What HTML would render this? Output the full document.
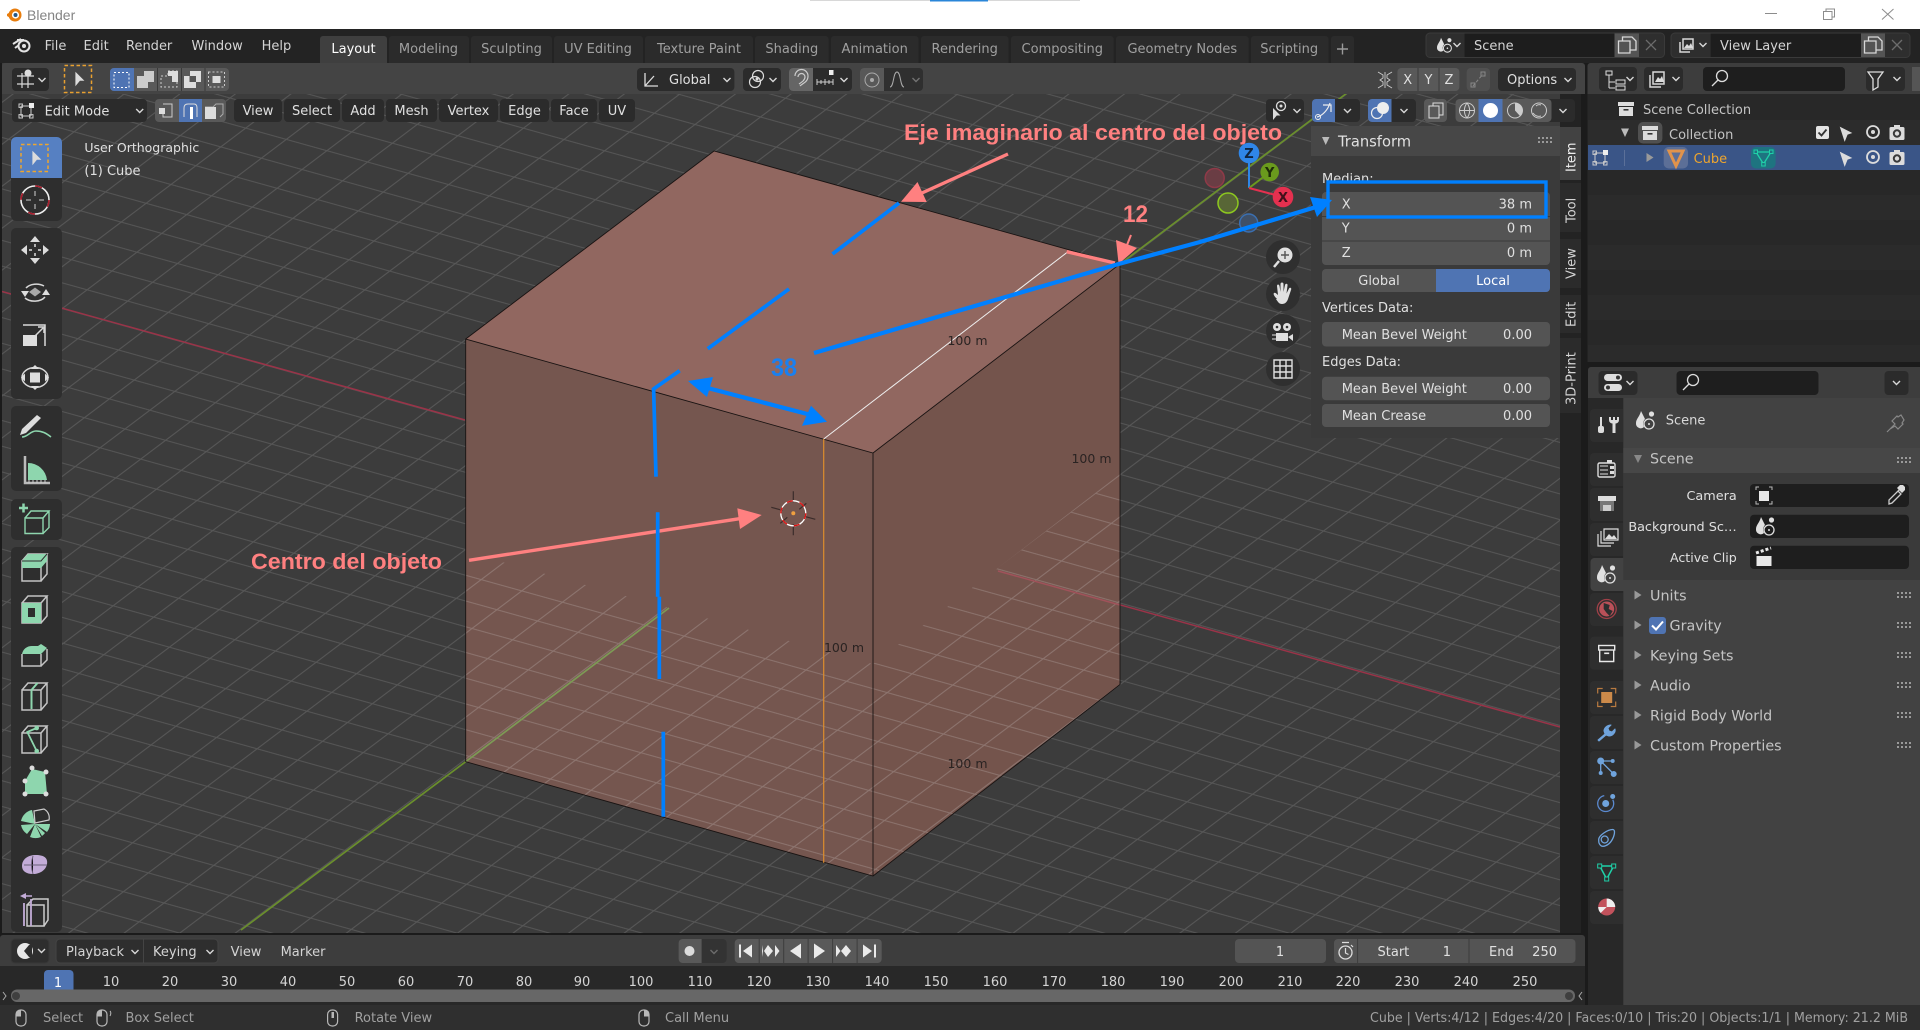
<!DOCTYPE html>
<html><head><meta charset="utf-8"><title>Blender</title>
<style>
html,body{margin:0;padding:0;background:#1c1c1c;width:1920px;height:1030px;overflow:hidden}
svg{display:block}
text{font-family:"DejaVu Sans","Liberation Sans",sans-serif;font-size:13px;fill:#d4d4d4;white-space:pre}
.m{fill:#e0e0e0}.d{fill:#a0a0a0}.e{text-anchor:end}.c{text-anchor:middle}
.p{font-family:"Liberation Sans",Arial,sans-serif;font-weight:bold;fill:#ff8080;font-size:22px}
.h{font-size:14.3px;fill:#c4c4c4}
.dim{fill:#2a2322;font-size:12.5px}
.r{fill:#545454}.b{fill:#2b2b2b}.k{fill:#1e1e1e}.bl{fill:#4f74b3}
.w{fill:none;stroke:#d8d8d8;stroke-width:1.5}
.tg{fill:none;stroke:#c4c4c4;stroke-width:1.5}
.gf{fill:#8ed6ae}
</style></head>
<body>
<svg width="1920" height="1030" viewBox="0 0 1920 1030" xmlns="http://www.w3.org/2000/svg">
<defs>
<pattern id="g" x="-5" y="-5" width="10" height="10" patternUnits="userSpaceOnUse" patternTransform="matrix(4.06 1.13 2.49 -1.88 793 512)">
<path d="M0 5H10" stroke="#575757" stroke-width=".38" fill="none"/><path d="M5 0V10" stroke="#575757" stroke-width=".32" fill="none"/>
</pattern>
<pattern id="g2" x="-5" y="-5" width="10" height="10" patternUnits="userSpaceOnUse" patternTransform="matrix(4.06 1.13 2.49 -1.88 793 512)">
<path d="M0 5H10" stroke="#a59490" stroke-width=".38" fill="none"/><path d="M5 0V10" stroke="#a59490" stroke-width=".32" fill="none"/>
</pattern>
<path id="ch" d="M-3.500-2L0 1.500L3.500-2" fill="none" stroke="#d8d8d8" stroke-width="1.400"/>
<path id="gr" d="M0 1h14M0 5h14" stroke="#9a9a9a" stroke-width="2" stroke-dasharray="2 2" fill="none"/>
<path id="tr" d="M-3.500-4.500L3.500 0L-3.500 4.500Z" fill="#999"/>
<g id="sc"><path d="M-5-9C-6-4-10-1-10 3A4.800 4.800 0 0 0-2 7A6.500 6.500 0 0 1-1-1Z" fill="#e0e0e0"/><circle cx="3" cy="4" r="5" fill="none" stroke="#e0e0e0" stroke-width="1.300"/><circle cx="3" cy="4" r="1" fill="#e0e0e0"/><circle cx="5.500" cy="-6" r="2.600" fill="#e0e0e0"/></g>
<g id="ar"><path d="M-8-6h16v4h-16zM-7-1h14v9h-14z" fill="#dcdcdc"/><rect x="-2.500" y="1" width="5" height="1.600" fill="#333"/></g>
<g id="ey"><circle r="6" fill="none" stroke="#dcdcdc" stroke-width="1.800"/><circle r="2" fill="#dcdcdc"/></g>
<g id="cm"><rect x="-7.500" y="-6" width="15" height="13" rx="1.500" fill="#dcdcdc"/><rect x="-3" y="-8" width="6" height="3" fill="#dcdcdc"/><circle cy="0.500" r="4.200" fill="#3a3a3a"/><circle cy="0.500" r="2.200" fill="#dcdcdc"/></g>
<path id="pt" d="M-4-8L6 2H1L-4 8Z" fill="#dcdcdc"/>
<path id="bx" class="tg" d="M-13-6h19v20h-19zM-13-6l6-7h19l-6 7M6 14l6-7V-13"/>
<g id="mo"><rect x="-5" y="-8" width="10" height="16" rx="4.500" fill="none" stroke="#b8b8b8" stroke-width="1.200"/></g>
<g id="vt"><path d="M-5-5H5M-5 5H5M-5-5V5M5-5V5" stroke="#ccc" stroke-width="1" fill="none"/><rect x="-7" y="-7" width="3.400" height="3.400" fill="none" stroke="#ccc"/><rect x="3" y="-8" width="5" height="5" fill="#eee"/><rect x="-7" y="3.600" width="3.400" height="3.400" fill="none" stroke="#ccc"/><rect x="3.600" y="3.600" width="3.400" height="3.400" fill="none" stroke="#ccc"/></g>
<clipPath id="vp"><rect x="2" y="63" width="1558" height="870"/></clipPath>
</defs>

<!-- base -->
<rect width="1920" height="1030" fill="#1b1b1b"/>
<rect width="1920" height="29" fill="#fff"/>
<rect x="810" y="0" width="270" height="1" fill="#d8d8d8"/><rect x="930" y="0" width="58" height="1.500" fill="#2a86d8"/>
<rect y="29" width="1920" height="34" fill="#232323"/>

<!-- titlebar -->
<g transform="translate(14,15)"><circle cx="1" cy="0" r="6.500" fill="#e87d0d"/><path d="M-7-1L0-5V5L-7 1Z" fill="#e87d0d"/><circle cx="1.500" cy="0" r="3.600" fill="#fff"/><circle cx="1.500" cy="0" r="2" fill="#265787"/></g>
<text x="27" y="20" style="font-family:'Liberation Sans',sans-serif;font-size:14px;fill:#848484">Blender</text>
<path d="M1765 13.500h12" stroke="#8c8c8c" fill="none"/>
<path d="M1823.500 11.500h8.500v8h-8.500zM1826 11.500v-2.500h8.500v8h-2.500" stroke="#8c8c8c" fill="none"/>
<path d="M1882 9l11.500 10.500M1893.500 9L1882 19.500" stroke="#8c8c8c" fill="none"/>

<!-- top menu -->
<g transform="translate(22,45)"><circle cx="2" cy="1" r="5.500" fill="none" stroke="#e4e4e4" stroke-width="2"/><circle cx="2" cy="1" r="2" fill="#e4e4e4"/><path d="M-9-1L-1-6M-7 3L-3 0M-5-5H2" stroke="#e4e4e4" stroke-width="2" fill="none"/></g>
<text x="44.600" y="50">File</text><text x="83.500" y="50">Edit</text><text x="126" y="50">Render</text><text x="191.500" y="50">Window</text><text x="261.600" y="50">Help</text>

<!-- workspace tabs -->
<path d="M320 63V39a3 3 0 0 1 3-3h61a3 3 0 0 1 3 3v24z" fill="#3f3f3f"/>
<g fill="#2b2b2b">
<path d="M389 63V39a3 3 0 0 1 3-3h74a3 3 0 0 1 3 3v24z"/>
<path d="M471 63V39a3 3 0 0 1 3-3h75a3 3 0 0 1 3 3v24z"/>
<path d="M554 63V39a3 3 0 0 1 3-3h83a3 3 0 0 1 3 3v24z"/>
<path d="M645 63V39a3 3 0 0 1 3-3h102a3 3 0 0 1 3 3v24z"/>
<path d="M755 63V39a3 3 0 0 1 3-3h67.600a3 3 0 0 1 3 3v24z"/>
<path d="M831 63V39a3 3 0 0 1 3-3h81.500a3 3 0 0 1 3 3v24z"/>
<path d="M921 63V39a3 3 0 0 1 3-3h81.500a3 3 0 0 1 3 3v24z"/>
<path d="M1011 63V39a3 3 0 0 1 3-3h96.700a3 3 0 0 1 3 3v24z"/>
<path d="M1116 63V39a3 3 0 0 1 3-3h126.700a3 3 0 0 1 3 3v24z"/>
<path d="M1251 63V39a3 3 0 0 1 3-3h71.500a3 3 0 0 1 3 3v24z"/>
<path d="M1331 63V39a3 3 0 0 1 3-3h17a3 3 0 0 1 3 3v24z"/>
</g>
<text class="c" x="353.500" y="53" style="fill:#fff">Layout</text>
<g class="d" text-anchor="middle"><text class="d c" x="428.500" y="53">Modeling</text><text class="d c" x="511.500" y="53">Sculpting</text><text class="d c" x="598" y="53">UV Editing</text><text class="d c" x="699" y="53">Texture Paint</text><text class="d c" x="791.800" y="53">Shading</text><text class="d c" x="874.700" y="53">Animation</text><text class="d c" x="964.700" y="53">Rendering</text><text class="d c" x="1062.300" y="53">Compositing</text><text class="d c" x="1182.300" y="53">Geometry Nodes</text><text class="d c" x="1289.200" y="53">Scripting</text></g>
<path d="M1337 49h11M1342.500 43.500v11" stroke="#9a9a9a" stroke-width="1.400"/>

<!-- scene selector -->
<rect x="1426" y="33" width="238.500" height="24.500" rx="4" fill="#2e2e2e" stroke="#3a3a3a"/>
<rect x="1464.500" y="33.500" width="150" height="23.500" fill="#1d1d1d"/>
<rect x="1614.500" y="33.500" width="24.500" height="23.500" fill="#545454"/>
<use href="#sc" transform="translate(1445,45) scale(.8)"/><use href="#ch" x="1457" y="45"/>
<text x="1474" y="50">Scene</text>
<path d="M1618.500 41h11.500v12h-11.500zM1622.500 41v-4h9.500l4 4v9h-6" fill="none" stroke="#d8d8d8" stroke-width="1.300"/>
<path d="M1646 40l10 10M1656 40l-10 10" stroke="#6c6c6c" stroke-width="1.300"/>
<rect x="1671" y="33" width="239" height="24.500" rx="4" fill="#2e2e2e" stroke="#3a3a3a"/>
<rect x="1710.700" y="33.500" width="150.300" height="23.500" fill="#1d1d1d"/>
<rect x="1861" y="33.500" width="24" height="23.500" fill="#545454"/>
<g class="w"><path d="M1680 42v10h10M1683 39v10h10V39z"/></g><path d="M1684 48l3-4 2 2 2-3 2 5z" fill="#dcdcdc"/><use href="#ch" x="1703" y="45"/>
<text x="1720" y="50">View Layer</text>
<path d="M1864.500 41h11.500v12h-11.500zM1868.500 41v-4h9.500l4 4v9h-6" fill="none" stroke="#d8d8d8" stroke-width="1.300"/>
<path d="M1892 40l10 10M1902 40l-10 10" stroke="#6c6c6c" stroke-width="1.300"/>

<!-- 3D viewport -->
<g clip-path="url(#vp)">
<rect x="2" y="63" width="1558" height="870" fill="#3c3c3c"/>
<rect x="2" y="63" width="1558" height="870" fill="url(#g)"/>
<!-- axes -->
<path d="M2 291.500L465 420M998 571L1560 727" stroke="#9a3348" stroke-width="1.500" fill="none"/>
<path d="M241 930L465.700 761.700M1120 264L1347 93" stroke="#6a8f2c" stroke-width="1.700" fill="none"/>
<!-- cube sides -->
<path d="M465.700 339L873 453V876L465.700 761.700Z" fill="#75564f"/>
<path d="M873 453L1120 264V684.500L873 876Z" fill="#74544c"/>
<path d="M465.700 552L873 664V876L465.700 761.700Z" fill="url(#g2)" opacity=".5"/>
<path d="M873 664L1120 474V684.500L873 876Z" fill="url(#g2)" opacity=".5"/>
<path d="M465.700 761.700L669 608" stroke="#7d9a55" stroke-width="1.700" fill="none"/>
<path d="M998 571L1120 605" stroke="#a0525a" stroke-width="1.500" fill="none"/>
<!-- top face -->
<path d="M465.700 339L714 151L1120 264L873 453Z" fill="#916760"/>
<path d="M465.700 339L714 151L1120 264L873 453ZM465.700 339V761.700L873 876L1120 684.500V264M873 453V876" fill="none" stroke="#191312" stroke-width=".9"/>
<path d="M823.700 439L1068 251.700" stroke="#eee" stroke-width="1"/>
<path d="M823.700 439V862.700" stroke="#dc8d2c" stroke-width="1.200"/>
<text class="dim c" x="967.500" y="345">100 m</text><text class="dim c" x="1091.500" y="463">100 m</text><text class="dim c" x="844" y="652">100 m</text><text class="dim c" x="967.500" y="768">100 m</text>

<!-- 3D cursor -->
<g transform="translate(793.300,513.300)">
<path d="M0-22V-11M0 11V22M-22-6L-11-3M11 3L22 6M-13 10L-6 4M6-4L13-10" stroke="#3b2c2a" stroke-width="1.200" fill="none"/>
<circle r="12.500" fill="none" stroke="#fff" stroke-width="1.300"/><circle r="12.500" fill="none" stroke="#d11" stroke-width="1.300" stroke-dasharray="6 7"/>
<circle r="2" fill="#f0a040"/>
</g>

<!-- gizmo -->
<g>
<circle cx="1214.700" cy="178" r="9.500" fill="#6a3d44" stroke="#8f3a48" stroke-width="1.500"/>
<circle cx="1228" cy="203" r="10" fill="#586636" stroke="#8dc81f" stroke-width="1.500"/>
<circle cx="1248.700" cy="223" r="9" fill="#3f5068" stroke="#3b6fb0" stroke-width="1.500"/>
<path d="M1249 188V160" stroke="#2f86e8" stroke-width="2"/><path d="M1249 188L1270 172" stroke="#6a9a1d" stroke-width="2"/><path d="M1249 188L1283 197" stroke="#e5304f" stroke-width="2"/>
<circle cx="1249" cy="153" r="10.300" fill="#2f86e8"/><circle cx="1269.700" cy="172" r="9.300" fill="#6a9a1d"/><circle cx="1283" cy="197" r="10.300" fill="#e5304f"/>
<text class="c" x="1249" y="158" style="font-weight:bold;fill:#10253f;font-size:13px">Z</text><text class="c" x="1269.700" y="177" style="font-weight:bold;fill:#1f2d08;font-size:13px">Y</text><text class="c" x="1283" y="202" style="font-weight:bold;fill:#40101a;font-size:13px">X</text>
</g>
<!-- nav gizmos -->
<circle cx="1283" cy="257" r="17" fill="#2f2f2f"/><circle cx="1283" cy="294" r="17" fill="#2f2f2f"/><circle cx="1283" cy="331" r="17" fill="#2f2f2f"/><circle cx="1283" cy="369" r="17" fill="#2f2f2f"/>
<circle cx="1285" cy="255" r="7.500" fill="#e0e0e0"/><path d="M1279 261L1274 267" stroke="#e0e0e0" stroke-width="2.500"/><path d="M1281 255h8M1285 251v8" stroke="#555" stroke-width="1.400"/>
<path transform="translate(0,3)" d="M1277 296c-3-3-4-5-3-6s3 1 4 2l-1-9c0-2 2-2 2.500 0l1 6 0-8c0-2 3-2 3 0v8l1.500-7c.5-2 3-1.500 2.500.5l-1 8 2.500-5c1-1.500 3-.5 2 1.500l-3 9c-1 3-3 5-6 5s-4-2-6-5z" fill="#e0e0e0"/>
<g transform="translate(0,2)"><circle cx="1277" cy="325" r="4" fill="#e0e0e0"/><circle cx="1287" cy="325" r="4" fill="#e0e0e0"/><rect x="1276" y="331" width="12" height="8" fill="#e0e0e0"/><path d="M1288 335l5-3v7z" fill="#e0e0e0"/><path d="M1272 333h4M1272 337h4" stroke="#e0e0e0"/><circle cx="1277" cy="325" r="1.300" fill="#333"/><circle cx="1287" cy="325" r="1.300" fill="#333"/></g>
<path d="M1274 360h18v18h-18zM1280 360v18M1286 360v18M1274 366h18M1274 372h18" fill="none" stroke="#e0e0e0" stroke-width="1.400"/>

<!-- annotations pink -->
<g fill="#ff8080" stroke="none">
<path d="M1008 154L917.500 195" stroke="#ff8080" stroke-width="3.400"/>
<path d="M901 201.700L917.500 182L926.700 202Z"/>
<path d="M469 560.300L742 518.300" stroke="#ff8080" stroke-width="3.400"/>
<path d="M761.700 515L737.300 508.300L740 529Z"/>
<path d="M1066.700 251.700L1115 263" stroke="#ff8080" stroke-width="3.400"/>
<path d="M1118.600 264L1116 240L1137 248Z"/><path d="M1127 245L1131 235" stroke="#ff8080" stroke-width="2"/>
</g>
<!-- annotations blue -->
<g stroke="#0080ff" fill="none" stroke-width="3.700">
<path d="M899 203L832.500 254M789 289L707.700 348.700M679.700 370.700L653.500 389L653.700 391.700L656 476.700"/>
<path d="M657.700 512.300V596.700M659.300 596.700V679M663.300 731.700V816.700"/>
<path d="M700 386L815 416" stroke-width="4.200"/>
</g>
<g fill="#0080ff">
<path d="M688 381L713 377L707 397Z"/>
<path d="M827 421.700L811 405.700L802 425.700Z"/>
</g>
<text x="771" y="376" style="font-family:'Liberation Sans',sans-serif;font-weight:bold;font-size:25px;fill:#1a80f0" textLength="26" lengthAdjust="spacingAndGlyphs">38</text>
<text class="p" x="904" y="140" textLength="378" lengthAdjust="spacingAndGlyphs">Eje imaginario al centro del objeto</text>
<text class="p" x="1123" y="222" textLength="25" lengthAdjust="spacingAndGlyphs" style="font-size:24px">12</text>
<text class="p" x="251" y="569" textLength="191" lengthAdjust="spacingAndGlyphs">Centro del objeto</text>

<text x="84.400" y="152" class="m" style="font-size:12.500px">User Orthographic</text>
<text x="84.400" y="175" class="m">(1) Cube</text>
</g>

<!-- tab strip -->
<rect x="1560" y="94" width="21" height="839" fill="#232323"/>
<path d="M1581 127h-21v53h21z" fill="#424242"/>
<path d="M1581 183h-21v49h21zM1581 239h-21v49h21zM1581 338h-21v75h21z" fill="#2b2b2b"/>
<rect x="1560" y="295" width="21" height="38" fill="#2b2b2b"/>
<g style="font-size:13px">
<text transform="translate(1575.500,172) rotate(-90)" style="fill:#eee">Item</text>
<text transform="translate(1575.500,223) rotate(-90)">Tool</text>
<text transform="translate(1575.500,279) rotate(-90)">View</text>
<text transform="translate(1575.500,327) rotate(-90)">Edit</text>
<text transform="translate(1575.500,405) rotate(-90)">3D-Print</text>
</g>

<!-- N panel -->
<rect x="1311" y="126" width="249" height="312" fill="#3a3a3a"/>
<rect x="1311" y="126" width="249" height="30" fill="#474747"/>
<path d="M1322 137h7.500L1325.700 145Z" fill="#bbb"/>
<text x="1338" y="146.500" style="font-size:14.700px;fill:#e0e0e0">Transform</text>
<use href="#gr" x="1538" y="137"/>
<text x="1322" y="183" class="m">Median:</text>
<rect x="1322" y="192" width="228" height="73" rx="4" class="r"/>
<path d="M1322 216.500h228M1322 241h228" stroke="#3a3a3a"/>
<text x="1341.700" y="208.300" class="m">X</text><text class="m e" x="1532" y="208.300">38 m</text>
<text x="1341.700" y="232.700" class="m">Y</text><text class="m e" x="1532" y="232.700">0 m</text>
<text x="1341.700" y="257" class="m">Z</text><text class="m e" x="1532" y="257">0 m</text>
<rect x="1322" y="269" width="228" height="23" rx="4" class="r"/>
<path d="M1436 269h110a4 4 0 0 1 4 4v15a4 4 0 0 1-4 4h-110z" class="bl"/>
<text class="m c" x="1379" y="285">Global</text><text class="c" x="1493" y="285" style="fill:#fff">Local</text>
<text x="1322" y="312" class="m">Vertices Data:</text>
<rect x="1322" y="322" width="228" height="24.500" rx="4" class="r"/>
<text x="1341.700" y="339" class="m">Mean Bevel Weight</text><text class="m e" x="1532" y="339">0.00</text>
<text x="1322" y="366" class="m">Edges Data:</text>
<rect x="1322" y="376.700" width="228" height="23.500" rx="4" class="r"/>
<text x="1341.700" y="393" class="m">Mean Bevel Weight</text><text class="m e" x="1532" y="393">0.00</text>
<rect x="1322" y="404" width="228" height="23" rx="4" class="r"/>
<text x="1341.700" y="420" class="m">Mean Crease</text><text class="m e" x="1532" y="420">0.00</text>
<rect x="1328" y="182" width="218" height="35" fill="none" stroke="#0080ff" stroke-width="3.400"/>
<path d="M814 353L1118.600 264L1200 242L1316 207" stroke="#0080ff" stroke-width="4.200" fill="none"/>
<path d="M1332 200L1310 197L1317 217Z" fill="#0080ff"/>

<!-- viewport header row 1 -->
<path d="M2 94V66a3 3 0 0 1 3-3h1577a3 3 0 0 1 3 3v28z" fill="#444"/>
<rect x="12" y="68" width="37" height="23" rx="4" class="b"/>
<g class="w" style="stroke-width:1.200"><path d="M17 76h17M17 84h17M22 73v15M28 73v15"/></g><circle cx="28" cy="73" r="3.500" fill="#ddd"/><use href="#ch" x="42" y="80"/>
<rect x="64.500" y="65.500" width="27" height="27" fill="none" stroke="#e8a030" stroke-width="1.500" stroke-dasharray="3.500 2.500"/>
<use href="#pt" transform="translate(79,79) scale(.9)"/>
<!-- select modes -->
<rect x="110" y="68" width="119" height="23" rx="4" fill="#595959"/>
<path d="M114 68h20v23h-20a4 4 0 0 1-4-4v-15a4 4 0 0 1 4-4z" class="bl"/>
<path d="M157.500 68v23M181.500 68v23M205 68v23" stroke="#3a3a3a"/>
<rect x="114" y="72.500" width="15" height="15" fill="none" stroke="#fff" stroke-dasharray="2 2"/>
<path d="M137 76h7v-5h10v11h-6v6h-11z" fill="#ccc"/>
<path d="M161 76h7v-5h9v16h-16z" fill="none" stroke="#ccc" stroke-dasharray="2 2"/><path d="M168 71h10v11h-6v-6h-4z" fill="#ddd"/>
<path d="M184 76h6v-5h11v11h-5v6h-12z" fill="#ddd"/><rect x="189.500" y="76" width="6.500" height="6" fill="#555"/>
<rect x="208.500" y="72" width="16" height="15" fill="none" stroke="#ccc" stroke-dasharray="2 2"/><rect x="212.500" y="76" width="8" height="7" fill="#ddd"/>
<!-- global -->
<rect x="637" y="68" width="97.400" height="23" rx="4" class="b"/>
<path d="M645 73v13h13M645 86l9-10" stroke="#ddd" stroke-width="1.300" fill="none"/>
<text x="669" y="84" class="m">Global</text><use href="#ch" x="727" y="80"/>
<rect x="743" y="68" width="38" height="23" rx="4" class="b"/>
<circle cx="758" cy="76" r="5.500" fill="none" stroke="#ddd" stroke-width="1.200"/><circle cx="755" cy="82" r="5.500" fill="none" stroke="#ddd" stroke-width="1.200"/><circle cx="757" cy="79" r="1.500" fill="#ddd"/><use href="#ch" x="773" y="80"/>
<rect x="789" y="68" width="63" height="23" rx="4" class="b"/>
<path d="M793 68h20v23h-20a4 4 0 0 1-4-4v-15a4 4 0 0 1 4-4z" fill="#656565"/>
<path d="M795 76a6.500 6.500 0 0 1 13 0c0 6-5 7-8 10M798 77a3.500 3.500 0 0 1 7 0c0 3-3 5-6 7" stroke="#ccc" stroke-width="1.200" fill="none"/>
<path d="M817 82h16M817 79v6M821 80v4M825 79v6M829 80v4M833 79v6" stroke="#ccc" fill="none"/><rect x="829" y="70" width="4.500" height="5" fill="#eee"/><use href="#ch" x="844" y="80"/>
<rect x="860" y="68" width="63" height="23" rx="4" fill="#2f2f2f"/>
<path d="M864 68h20v23h-20a4 4 0 0 1-4-4v-15a4 4 0 0 1 4-4z" fill="#585858"/>
<circle cx="872" cy="80" r="7" fill="none" stroke="#aaa"/><circle cx="872" cy="80" r="2" fill="#aaa"/>
<path d="M890 87c4 0 3-15 7-15s3 15 7 15" stroke="#aaa" fill="none"/><use href="#ch" x="916" y="80" opacity=".4"/>
<!-- mirror xyz -->
<path d="M1378 72l5 3v3l-3 2 3 2v3l-5 3M1392 72l-5 3v3l3 2-3 2v3l5 3M1385 72v16" stroke="#ccc" fill="none" stroke-width=".9"/>
<rect x="1397.400" y="68" width="62" height="23" rx="4" fill="#595959"/><path d="M1418 68v23M1439 68v23" stroke="#3a3a3a"/>
<text class="m c" x="1407.700" y="84">X</text><text class="m c" x="1428.500" y="84">Y</text><text class="m c" x="1449" y="84">Z</text>
<rect x="1466.700" y="68" width="23.300" height="23" rx="4" fill="#505050"/><path d="M1473 86l10-12" stroke="#888" stroke-dasharray="3 2"/><rect x="1471" y="83" width="4" height="4" fill="none" stroke="#888"/><rect x="1481" y="72" width="4" height="4" fill="none" stroke="#888"/>
<rect x="1498" y="68" width="78" height="23" rx="4" class="b"/><text x="1507" y="84" class="m">Options</text><use href="#ch" x="1568" y="80"/>

<!-- viewport header row 2 -->
<rect x="12" y="99" width="135" height="23" rx="4" class="b"/><use href="#vt" x="26" y="111"/><text x="44.600" y="115.500" class="m">Edit Mode</text><use href="#ch" x="139.700" y="111"/>
<rect x="155" y="99" width="71" height="23" rx="4" fill="#595959"/><rect x="179" y="99" width="23" height="23" class="bl"/>
<path d="M163 104h9v13h-9v-5" fill="none" stroke="#ccc"/><rect x="159" y="108" width="6" height="6" fill="#ddd"/>
<path d="M184 117v-9q0-4 4-4h6q3 0 3 4v9" stroke="#ddd" fill="none"/><rect x="190" y="107" width="3" height="12" fill="#fff"/>
<path d="M205 107h8l3-3h7v10l-3 3" stroke="#aaa" fill="none"/><rect x="205" y="107" width="11" height="12" fill="#ddd"/>
<g fill="#2b2b2b"><rect x="234" y="99" width="48" height="23" rx="4"/><rect x="284" y="99" width="56" height="23" rx="4"/><rect x="342" y="99" width="42" height="23" rx="4"/><rect x="386" y="99" width="51" height="23" rx="4"/><rect x="439" y="99" width="59" height="23" rx="4"/><rect x="500" y="99" width="49" height="23" rx="4"/><rect x="551" y="99" width="46" height="23" rx="4"/><rect x="599" y="99" width="36" height="23" rx="4"/></g>
<text class="m c" x="258" y="115">View</text><text class="m c" x="312" y="115">Select</text><text class="m c" x="363" y="115">Add</text><text class="m c" x="411.500" y="115">Mesh</text><text class="m c" x="468.500" y="115">Vertex</text><text class="m c" x="524.500" y="115">Edge</text><text class="m c" x="574" y="115">Face</text><text class="m c" x="617" y="115">UV</text>
<!-- right of row 2 -->
<rect x="1266" y="99" width="38" height="23" rx="4" class="b"/>
<use href="#ey" transform="translate(1281,106) scale(.75)"/><use href="#pt" transform="translate(1276,114) scale(.75)"/><use href="#ch" x="1297" y="111"/>
<rect x="1312.400" y="99" width="47.600" height="23" rx="4" class="b"/><path d="M1316 99h19v23h-19a4 4 0 0 1-4-4v-15a4 4 0 0 1 4-4z" class="bl"/>
<path d="M1317 117c5-1 11-7 13-14M1323 105h8v7" stroke="#eee" fill="none" stroke-width="1.200"/><circle cx="1318" cy="117" r="2.500" fill="none" stroke="#eee"/><use href="#ch" x="1347.500" y="111"/>
<rect x="1368" y="99" width="48" height="23" rx="4" class="b"/><path d="M1372 99h19.500v23H1372a4 4 0 0 1-4-4v-15a4 4 0 0 1 4-4z" class="bl"/>
<circle cx="1383" cy="108" r="6" fill="#eee"/><circle cx="1377" cy="113" r="5.500" fill="none" stroke="#eee" stroke-width="1.200"/><use href="#ch" x="1404" y="111"/>
<rect x="1424" y="99" width="23" height="23" rx="4" fill="#595959"/><path d="M1429 106h10v12h-10zM1433 106v-3h10v12h-4" stroke="#ddd" fill="none"/>
<rect x="1455.500" y="99" width="119.500" height="23" rx="4" class="b"/><rect x="1455.500" y="99" width="96" height="23" rx="4" fill="#595959"/><rect x="1478.500" y="99" width="24" height="23" class="bl"/>
<circle cx="1467" cy="110.500" r="7.500" fill="none" stroke="#ccc"/><path d="M1459.500 110.500h15M1467 103a12 12 0 0 1 0 15M1467 103a12 12 0 0 0 0 15" stroke="#ccc" fill="none"/>
<circle cx="1490.500" cy="110.500" r="7.500" fill="#fff"/>
<circle cx="1515" cy="110.500" r="7.500" fill="none" stroke="#ccc"/><path d="M1515 103a7.500 7.500 0 0 1 5 13l-5-5.500z" fill="#ccc"/>
<circle cx="1539" cy="110.500" r="7.500" fill="none" stroke="#ccc"/><path d="M1536 106a5 5 0 0 1 5-1" stroke="#ccc" fill="none"/><path d="M1533 113a7 7 0 0 0 8 3" stroke="#ccc" fill="none"/><use href="#ch" x="1563" y="111"/>

<!-- left toolbar -->
<g fill="#2e2e2e">
<rect x="11" y="137" width="51" height="84" rx="5"/><rect x="11" y="228" width="51" height="171" rx="5"/><rect x="11" y="406" width="51" height="85" rx="5"/><rect x="11" y="499" width="51" height="41" rx="5"/><rect x="11" y="547" width="51" height="385" rx="5"/>
</g>
<path d="M16 137h41a5 5 0 0 1 5 5v36H11v-36a5 5 0 0 1 5-5z" fill="#5680c2"/>
<rect x="21" y="144.500" width="27" height="27" fill="none" stroke="#eda62e" stroke-width="1.500" stroke-dasharray="3.500 2.500"/>
<use href="#pt" transform="translate(36,158) scale(.9)"/>
<circle cx="35" cy="200" r="14" fill="none" stroke="#eee" stroke-width="1.600"/><circle cx="35" cy="200" r="14" fill="none" stroke="#a81c2c" stroke-width="1.600" stroke-dasharray="7 15"/><path d="M35 191v5M35 204v5M26 200h5M39 200h5" stroke="#9a9a9a" stroke-width="1.500"/>
<!-- move -->
<g fill="#dcdcdc"><path d="M35 236l5 6h-10zM35 264l5-6h-10zM21 250l6-5v10zM49 250l-6-5v10z"/></g><path d="M35 244v3M35 253v3M29 250h3M38 250h3" stroke="#ddd" stroke-width="1.500"/>
<!-- rotate -->
<path d="M26 288A12 8 0 0 1 44 286M25 298A12 8 0 0 0 45 297" class="w"/><path d="M21 291h8l-4 6zM42 295h8l-4-6z" fill="#ddd"/><path d="M35 287.500l6 4.500-6 4.500-6-4.500z" fill="#a8a8a8"/>
<!-- scale -->
<path d="M23 325h22v21" class="w" fill="none"/><rect x="23" y="335" width="14" height="11" fill="#ddd"/><path d="M35 336l8-8M38 327h6v6" class="w" fill="none"/>
<!-- transform -->
<ellipse cx="35" cy="377.500" rx="13" ry="10" class="w" fill="none"/><rect x="30" y="372.500" width="10" height="10" fill="#ddd"/><path d="M35 365l4 4h-8zM35 390l4-4h-8zM21 377.500l4-4v8zM49 377.500l-4-4v8z" fill="#ddd"/>
<!-- annotate -->
<path d="M20 435l2-6 15-14 4 3-15 15z" fill="#ddd"/><path d="M22 437C28 437 30 431 36 431S46 433 51 437" stroke="#8ed6ae" stroke-width="1.500" fill="none"/>
<!-- measure -->
<path d="M25 456v27h25" stroke="#bbb" stroke-width="2.500" fill="none"/><path d="M28 463a19 19 0 0 1 19 17h-19z" class="gf"/><path d="M29 480v3M33 480v3M37 480v3M41 480v3M45 480v3" stroke="#ccc"/>
<!-- add cube -->
<path d="M19 508h9M23.500 503.500v9" stroke="#8ed6ae" stroke-width="2.500"/>
<path d="M25 518h18v15.500h-18zM25 518l6-7h18l-6 7M43 533.500l6-6V511" fill="none" stroke="#8ed6ae" stroke-width="1.400"/>
<!-- extrude -->
<use href="#bx" transform="translate(35,567)"/><path d="M22 568v-7l6-7h19v7l-6 7z" class="gf"/><path d="M22 561h19l6-7" stroke="#2e2e2e" fill="none"/>
<!-- inset -->
<use href="#bx" transform="translate(35,609)"/><path d="M22 603h19v20H22z" class="gf"/><path d="M28 608h7v9h-7z" fill="#2e2e2e"/>
<!-- bevel -->
<path d="M22 654v12h19v-12M41 666l6-6v-11" class="tg"/><path d="M22 654C23 649 27 646 32 646H38L41 644L47 648L41 654Z" class="gf"/>
<!-- loop cut -->
<use href="#bx" transform="translate(35,696)"/><path d="M31.500 709V690l6-7" stroke="#8ed6ae" stroke-width="2" fill="none"/>
<!-- knife -->
<use href="#bx" transform="translate(35,739)"/><path d="M36.700 728L27.300 732L36.700 751" stroke="#8ed6ae" stroke-width="1.800" fill="none"/><circle cx="36.700" cy="728" r="2.300" class="gf"/><circle cx="36.700" cy="751" r="2.300" class="gf"/>
<!-- poly build -->
<path d="M25 794l0-13 7-12 13 3 2 22z" class="gf"/><g fill="#ddd"><circle cx="32" cy="768" r="2.500"/><circle cx="46" cy="772" r="2.500"/><circle cx="25" cy="781" r="2.500"/><circle cx="25" cy="794" r="2.500"/><circle cx="46" cy="794" r="2.500"/></g>
<!-- spin -->
<path d="M35 824l-14-3a14 14 0 0 1 11-11zM35 824l-14 1a14 14 0 0 0 6 9zM35 824l-5 13a14 14 0 0 0 11 0zM35 824l10 9a14 14 0 0 1-3 3zM35 824l15 0a14 14 0 0 1-3 8z" class="gf"/><path d="M34 811l10-2a10 10 0 0 1 5 11l-14 3z" fill="none" stroke="#ccc" stroke-width="1.200"/>
<!-- smooth -->
<path d="M22 866c0-7 6-11 14-11s12 3 11 9-7 10-14 10-11-3-11-8z" fill="#c3acd8"/><path d="M24 865h23M33 856c-2 6-2 12 0 18" stroke="#6a5f78"/>
<!-- shrink -->
<path d="M27 905h17v21H27zM27 905l6-6h15v21l-4 6" fill="none" stroke="#ccc" stroke-width="1.500"/><path d="M24 903v23M31 899v27" stroke="#c3acd8" stroke-width="1.800"/><path d="M20 896l6-3v6z" fill="#c3acd8"/><path d="M26 896h6" stroke="#c3acd8" stroke-width="1.500"/>

<!-- timeline -->
<path d="M0 1005V938a3 3 0 0 1 3-3h1579a3 3 0 0 1 3 3v67z" fill="#3d3d3d"/>
<rect x="0" y="966" width="1585" height="39" fill="#282828"/>
<rect x="11" y="939" width="38" height="24" rx="4" fill="#2e2e2e" stroke="#383838"/>
<circle cx="25" cy="951" r="8" fill="#e8e8e8"/><path d="M29 945l-5 6 5 6h3v-12z" fill="#2e2e2e"/><use href="#ch" x="41.500" y="951"/>
<rect x="56" y="939" width="162" height="24" rx="4" fill="#2e2e2e" stroke="#444"/><path d="M143.500 939v24" stroke="#444"/>
<text x="66" y="956">Playback</text><use href="#ch" x="135" y="952"/><text x="153" y="956">Keying</text><use href="#ch" x="210" y="952"/>
<text x="230.600" y="956">View</text><text x="280.600" y="956">Marker</text>
<rect x="678.600" y="939" width="48" height="24" rx="4" fill="#333"/><path d="M682.600 939h19v24h-19a4 4 0 0 1-4-4v-16a4 4 0 0 1 4-4z" fill="#595959"/><circle cx="689.500" cy="951" r="5" fill="#dcdcdc"/><use href="#ch" x="714" y="952" opacity=".35"/>
<rect x="734.700" y="939" width="147" height="24" rx="4" fill="#595959"/>
<path d="M759.200 939v24M783.700 939v24M808.100 939v24M832.600 939v24M857.100 939v24" stroke="#3d3d3d"/>
<g fill="#eaeaea"><path d="M739 944.500h2v13h-2zM752 944.500v13l-9-6.500z"/><path d="M768 945l5 6-5 6-4-6zM775 945v12l4.500-6zM762 951l-0 0M763 945v12l-1-6z"/><path d="M801 943.500v15l-11-7.500z"/><path d="M814 943.500v15l11-7.500z" /><path d="M836 945l4.500 6-4.500 6zM846 945l5 6-5 6-5-6z"/><path d="M863 944.500v13l9-6.500zM874 944.500h2v13h-2z"/></g>
<rect x="1235" y="939" width="91" height="24" rx="4" class="r"/><text class="m c" x="1280" y="956">1</text>
<rect x="1334" y="939" width="241.500" height="24" rx="4" class="r"/><path d="M1357.600 939v24M1469 939v24" stroke="#3d3d3d"/>
<circle cx="1345.500" cy="952.500" r="6.500" fill="none" stroke="#ddd" stroke-width="1.300"/><path d="M1342 942.500h7M1345.500 948v5l3 1.500M1351 945l2 2" stroke="#ddd" fill="none" stroke-width="1.200"/>
<text class="m" x="1377.500" y="956">Start</text><text class="m e" x="1451" y="956">1</text><text class="m" x="1489" y="956">End</text><text class="m e" x="1557" y="956">250</text>
<g style="font-size:12.500px"><path d="M44 990v-16a4 4 0 0 1 4-4h21.500a4 4 0 0 1 4 4v16z" class="bl"/>
<text class="c" x="58" y="987" style="fill:#fff">1</text>
<text class="c" x="111" y="986">10</text><text class="c" x="170" y="986">20</text><text class="c" x="229" y="986">30</text><text class="c" x="288" y="986">40</text><text class="c" x="347" y="986">50</text><text class="c" x="406" y="986">60</text><text class="c" x="465" y="986">70</text><text class="c" x="524" y="986">80</text><text class="c" x="582" y="986">90</text><text class="c" x="641" y="986">100</text><text class="c" x="700" y="986">110</text><text class="c" x="759" y="986">120</text><text class="c" x="818" y="986">130</text><text class="c" x="877" y="986">140</text><text class="c" x="936" y="986">150</text><text class="c" x="995" y="986">160</text><text class="c" x="1054" y="986">170</text><text class="c" x="1113" y="986">180</text><text class="c" x="1172" y="986">190</text><text class="c" x="1231" y="986">200</text><text class="c" x="1290" y="986">210</text><text class="c" x="1348" y="986">220</text><text class="c" x="1407" y="986">230</text><text class="c" x="1466" y="986">240</text><text class="c" x="1525" y="986">250</text></g>
<rect x="11" y="989.500" width="1564" height="12.500" rx="6" fill="#676767"/><circle cx="16" cy="996" r="4" fill="#3f3f3f"/><circle cx="1569" cy="996" r="4" fill="#3f3f3f"/>
<path d="M3 992l3 4-3 4M1582 992l-3 4 3 4" stroke="#aaa" fill="none"/>

<!-- status bar -->
<rect x="0" y="1005" width="1920" height="25" fill="#2f2f2f"/>
<g class="d"><use href="#mo" x="21" y="1018"/><path d="M21 1010.500h-3q-2 0-2 3v3h5z" fill="#b8b8b8"/><text x="43" y="1022" class="d">Select</text>
<use href="#mo" x="102" y="1018"/><path d="M102 1010.500h-3q-2 0-2 3v3h5z" fill="#b8b8b8"/><path d="M110 1011c1 1 1 3 0 5" stroke="#b8b8b8" fill="none"/><text x="125.500" y="1022" class="d">Box Select</text>
<use href="#mo" x="332.600" y="1018"/><rect x="331.500" y="1012" width="2.500" height="6" fill="#b8b8b8"/><text x="354.600" y="1022" class="d">Rotate View</text>
<use href="#mo" x="644" y="1018"/><path d="M644 1010.500h3q2 0 2 3v3h-5z" fill="#b8b8b8"/><text x="665" y="1022" class="d">Call Menu</text>
<text class="d e" x="1908" y="1022" textLength="538" lengthAdjust="spacingAndGlyphs">Cube | Verts:4/12 | Edges:4/20 | Faces:0/10 | Tris:20 | Objects:1/1 | Memory: 21.2 MiB</text></g>

<!-- outliner -->
<path d="M1587.500 362V66a3 3 0 0 1 3-3H1920V362z" fill="#282828"/>
<path d="M1587.500 94V66a3 3 0 0 1 3-3H1920V94z" fill="#3d3d3d"/>
<rect x="1599" y="67" width="38" height="24" rx="4" class="b"/><path d="M1606 71h6v4h-6zM1609 75v13M1609 82h6M1609 88h6M1616 80h9v4h-9zM1616 86h9v4h-9z" stroke="#ddd" fill="none"/><use href="#ch" x="1630" y="79"/>
<rect x="1644" y="67" width="39" height="24" rx="4" class="b"/><path d="M1650 75v12h11M1653 72v12h11V72z" class="w"/><path d="M1655 82l3-5 2 2 2-3 2 6z" fill="#ddd"/><use href="#ch" x="1676" y="79"/>
<rect x="1703" y="67" width="142" height="24" rx="4" class="k"/><circle cx="1722" cy="76" r="5.500" fill="none" stroke="#ddd" stroke-width="1.300"/><path d="M1718 80l-6 6" stroke="#ddd" stroke-width="1.300"/>
<rect x="1866" y="67" width="39" height="24" rx="4" class="b"/><path d="M1868 72h15l-5 7v8l-5 3V79z" stroke="#ddd" fill="none" stroke-width="1.300"/><use href="#ch" x="1897" y="79"/>
<rect x="1912" y="67" width="8" height="24" fill="#555"/>
<rect x="1588" y="120" width="332" height="25" fill="#2c2c2c"/><rect x="1588" y="145" width="332" height="25" fill="#3a5587"/>
<rect x="1588" y="195" width="332" height="25" fill="#2b2b2b"/><rect x="1588" y="245" width="332" height="25" fill="#2b2b2b"/><rect x="1588" y="295" width="332" height="25" fill="#2b2b2b"/><rect x="1588" y="345" width="332" height="17" fill="#2b2b2b"/>
<use href="#ar" x="1626" y="108"/><text x="1643" y="114" class="d" style="fill:#c4c4c4">Scene Collection</text>
<path d="M1621 128.500h8L1625 137Z" fill="#bbb"/>
<rect x="1638" y="122" width="24.400" height="21.500" rx="5" fill="#505050"/><use href="#ar" x="1650" y="132"/><text x="1669" y="139" style="fill:#c4c4c4">Collection</text>
<rect x="1816" y="126" width="13" height="13" rx="2" fill="#e4e4e4"/><path d="M1818.500 132.500l3 3 5-6" stroke="#333" stroke-width="1.800" fill="none"/>
<use href="#pt" transform="translate(1846,133) rotate(-18)"/><use href="#ey" x="1873" y="132"/><use href="#cm" x="1897" y="133"/>
<use href="#vt" x="1600" y="158"/>
<path d="M1624.500 150v16" stroke="#5b7099"/>
<use href="#tr" x="1650" y="157.500"/>
<rect x="1663.700" y="147" width="24.300" height="21.500" rx="5" fill="#5c6f97"/><path d="M1669 151h14l-7 15z" fill="none" stroke="#e0934c" stroke-width="3"/>
<text x="1693.600" y="163" style="fill:#eda52e">Cube</text>
<rect x="1751" y="147" width="24.600" height="21.500" rx="5" fill="#1e7480"/><path d="M1756 152h15l-7.500 12z" fill="none" stroke="#1fd0a8" stroke-width="1.300"/><rect x="1754" y="150" width="3.500" height="3.500" fill="#1e7480" stroke="#1fd0a8"/><rect x="1769.500" y="150" width="3.500" height="3.500" fill="#1e7480" stroke="#1fd0a8"/><rect x="1761.700" y="162.500" width="3.500" height="3.500" fill="#1e7480" stroke="#1fd0a8"/>
<use href="#pt" transform="translate(1846,158) rotate(-18)"/><use href="#ey" x="1873" y="157"/><use href="#cm" x="1897" y="158"/>

<!-- properties -->
<path d="M1588 1005V370a3 3 0 0 1 3-3H1920V1005z" fill="#282828"/>
<rect x="1623.300" y="398" width="296.700" height="607" fill="#424242"/>
<path d="M1588 398V370a3 3 0 0 1 3-3H1920V398z" fill="#3d3d3d"/>
<rect x="1598.500" y="371" width="39" height="24" rx="4" class="b"/><rect x="1604" y="374" width="18" height="7" rx="3.500" fill="#ddd"/><rect x="1604" y="384" width="18" height="7" rx="3.500" fill="#ddd"/><circle cx="1618" cy="377.500" r="2" fill="#333"/><circle cx="1608" cy="387.500" r="2" fill="#333"/><use href="#ch" x="1630" y="383"/>
<rect x="1676.500" y="371" width="142" height="24" rx="4" class="k"/><circle cx="1693" cy="380" r="5.500" fill="none" stroke="#ddd" stroke-width="1.300"/><path d="M1689 384l-6 6" stroke="#ddd" stroke-width="1.300"/>
<rect x="1884.500" y="371" width="24" height="24" rx="4" class="b"/><use href="#ch" x="1896.500" y="383"/>
<!-- tabs -->
<g fill="#2e2e2e">
<path d="M1623 409h-29a4 4 0 0 0-4 4v25a4 4 0 0 0 4 4h29z"/>
<path d="M1623 453h-29a4 4 0 0 0-4 4v25a4 4 0 0 0 4 4h29z"/>
<path d="M1623 488h-29a4 4 0 0 0-4 4v25a4 4 0 0 0 4 4h29z"/>
<path d="M1623 523h-29a4 4 0 0 0-4 4v25a4 4 0 0 0 4 4h29z"/>
<path d="M1623 593h-29a4 4 0 0 0-4 4v25a4 4 0 0 0 4 4h29z"/>
<path d="M1623 636.700h-29a4 4 0 0 0-4 4v25a4 4 0 0 0 4 4h29z"/>
<path d="M1623 681h-29a4 4 0 0 0-4 4v25a4 4 0 0 0 4 4h29z"/>
<path d="M1623 716h-29a4 4 0 0 0-4 4v25a4 4 0 0 0 4 4h29z"/>
<path d="M1623 751h-29a4 4 0 0 0-4 4v25a4 4 0 0 0 4 4h29z"/>
<path d="M1623 786h-29a4 4 0 0 0-4 4v25a4 4 0 0 0 4 4h29z"/>
<path d="M1623 821h-29a4 4 0 0 0-4 4v25a4 4 0 0 0 4 4h29z"/>
<path d="M1623 856h-29a4 4 0 0 0-4 4v25a4 4 0 0 0 4 4h29z"/>
<path d="M1623 891h-29a4 4 0 0 0-4 4v25a4 4 0 0 0 4 4h29z"/>
</g>
<path d="M1623.500 558h-29a4 4 0 0 0-4 4v25a4 4 0 0 0 4 4h29z" fill="#424242"/>
<!-- tab icons -->
<path d="M1601 417v9" stroke="#ddd" stroke-width="2"/><rect x="1598" y="426" width="6" height="7" rx="2" fill="#ddd"/><path d="M1609 417v3a3.500 3.500 0 0 0 3.500 3.500v9.500h3v-9.500a3.500 3.500 0 0 0 3.500-3.500v-3l-2 0v3h-2v-3h-2v3h-2v-3z" fill="#ddd"/>
<rect x="1598" y="463" width="17" height="14" rx="1.500" fill="none" stroke="#ddd" stroke-width="1.400"/><path d="M1600 466h8M1600 470h8M1600 474h8" stroke="#ddd"/><rect x="1610" y="466" width="4" height="3" fill="#ddd"/><rect x="1610" y="471" width="4" height="3" fill="#ddd"/><rect x="1607" y="460" width="5" height="3" fill="#ddd"/>
<path d="M1598 496h18v5h-18z" fill="#ddd"/><path d="M1600 501h14v10h-14z" fill="#777"/><path d="M1603 511v-6h8v6z" fill="#ccc"/>
<path d="M1598 534v12h13M1601 531v12h13M1604 529h14v11h-14z" stroke="#ddd" fill="none" stroke-width="1.200"/><path d="M1605 539l4-5 3 3 2-2 3 4z" fill="#ddd"/><use href="#sc" x="1607" y="574"/>
<g transform="translate(1606.700,609)"><circle r="7.500" fill="#bb5058"/><circle r="9.500" fill="none" stroke="#a04048" stroke-width="1.300"/><path d="M-3-6l6 2-1 4 4 2-3 5-3-3-3-4z" fill="#2e2e2e"/></g>
<g transform="translate(1606.700,653.500)"><rect x="-8" y="-8" width="16" height="4.500" fill="none" stroke="#e8e8e8" stroke-width="1.400"/><path d="M-7-3.500V8h14V-3.500" fill="none" stroke="#e8e8e8" stroke-width="1.400"/><rect x="-2.500" y="-1" width="5" height="1.600" fill="#e8e8e8"/></g>
<g transform="translate(1606.700,697.500)"><rect x="-5.500" y="-5.500" width="11" height="11" fill="#cc8a4a"/><path d="M-9-4v-5h5M4-9h5v5M9 4v5h-5M-4 9h-5v-5" stroke="#b87a40" stroke-width="1.200" fill="none"/></g>
<path transform="translate(0,-3)" d="M1598 743l7-6-1-3c0-3 3-6 7-6l-3 3 1 3 3 1 3-3c1 4-3 7-6 7l-3-1-7 6z" fill="#6fa3dc" stroke="#6fa3dc" stroke-linejoin="round"/>
<g transform="translate(1606.700,767)" stroke="#6fa3dc" fill="#6fa3dc"><circle cx="-6" cy="-6" r="3"/><circle cx="6" cy="-6" r="1.500"/><circle cx="-6" cy="6" r="1.500"/><circle cx="7" cy="7" r="2.500"/><path d="M-6-6H6M-6-6V6M-6-6L7 7" stroke-width="1.300" fill="none"/></g>
<g transform="translate(1606.700,802.500)"><circle cx="-1" cy="1" r="8" fill="none" stroke="#5b8ad0" stroke-width="1.300" stroke-dasharray="36 10"/><circle cx="-1" cy="1" r="3.500" fill="#6fa3dc"/><circle cx="6" cy="-6" r="2.500" fill="#6fa3dc"/></g>
<g transform="translate(1606.700,837.500)" fill="none" stroke="#6fa3dc" stroke-width="1.300"><path d="M-8 2c0-4 9-10 14-10 3 0 2 6-1 11-3 5-9 7-11 5s-2-3-2-6z"/><circle cx="-2" cy="2" r="3.500"/></g>
<g transform="translate(1606.700,872)"><path d="M-7-6H7L0 7Z" fill="none" stroke="#1fd0a8" stroke-width="1.500"/><rect x="-9" y="-8" width="4" height="4" fill="#2e2e2e" stroke="#1fd0a8"/><rect x="5" y="-8" width="4" height="4" fill="#2e2e2e" stroke="#1fd0a8"/><rect x="-2" y="5" width="4" height="4" fill="#2e2e2e" stroke="#1fd0a8"/></g>
<g transform="translate(1606.700,907)"><circle r="8.500" fill="#c2525c"/><path d="M0-8.500A8.500 8.500 0 0 1 8.500 0L0 0Z" fill="#eee"/><path d="M0 0L-6 6A8.500 8.500 0 0 1-8.500 0Z" fill="#eee"/></g>
<!-- context -->
<use href="#sc" x="1646" y="420"/><text x="1665.700" y="424.500" class="m" style="fill:#d8d8d8">Scene</text>
<path d="M1890 429l5-5-3-3 5-5 1 1 3-2 3 5-2 3 1 1-5 5-3-3zM1890 429l-3 3" fill="none" stroke="#888" stroke-width="1.200"/>
<!-- Scene panel -->
<rect x="1623.300" y="448" width="296.700" height="25" fill="#474747"/>
<path d="M1634 455h8L1638 463Z" fill="#888"/>
<text x="1650" y="463.500" class="h">Scene</text><use href="#gr" x="1897" y="457"/>
<rect x="1623.300" y="473" width="296.700" height="107" fill="#3a3a3a"/>
<text class="m e" x="1736.700" y="500" style="font-size:12.800px">Camera</text><text class="m e" x="1736.700" y="531" style="font-size:12.800px">Background Sc…</text><text class="m e" x="1736.700" y="562" style="font-size:12.600px">Active Clip</text>
<rect x="1750" y="484" width="159" height="23" rx="4" class="k"/><rect x="1750" y="514.700" width="159" height="23.300" rx="4" class="k"/><rect x="1750" y="545.700" width="159" height="23.300" rx="4" class="k"/>
<rect x="1759" y="491" width="10" height="10" fill="#e8e8e8"/><path d="M1756 490v-3h3M1769 487h3v3M1772 501v3h-3M1759 504h-3v-3" stroke="#bbb" fill="none"/>
<path d="M1889 504l3-1 9-9-3-3-9 9zM1898 491l4-4" fill="none" stroke="#ccc" stroke-width="1.300"/><path d="M1897 488l3-3 3 0 2 2 0 3-3 3z" fill="#ddd"/>
<use href="#sc" x="1766" y="526"/>
<rect x="1756.500" y="556" width="15" height="10" fill="#e8e8e8"/><path d="M1756 553l15-5" stroke="#e8e8e8" stroke-width="3" stroke-dasharray="3 2"/>
<!-- collapsed -->
<g><use href="#tr" x="1638" y="595"/><text x="1650" y="600.700" class="h">Units</text><use href="#gr" x="1897" y="592"/>
<use href="#tr" x="1638" y="625"/><rect x="1649" y="617" width="17" height="17" rx="3" class="bl"/><path d="M1652 625.500l4 4 7-8" stroke="#fff" stroke-width="2" fill="none"/><text x="1669.500" y="630.700" class="h">Gravity</text><use href="#gr" x="1897" y="622"/>
<use href="#tr" x="1638" y="655"/><text x="1650" y="660.700" class="h">Keying Sets</text><use href="#gr" x="1897" y="652"/>
<use href="#tr" x="1638" y="685"/><text x="1650" y="690.700" class="h">Audio</text><use href="#gr" x="1897" y="682"/>
<use href="#tr" x="1638" y="715"/><text x="1650" y="720.700" class="h">Rigid Body World</text><use href="#gr" x="1897" y="712"/>
<use href="#tr" x="1638" y="745"/><text x="1650" y="750.700" class="h">Custom Properties</text><use href="#gr" x="1897" y="742"/></g>
</svg>
</body></html>
